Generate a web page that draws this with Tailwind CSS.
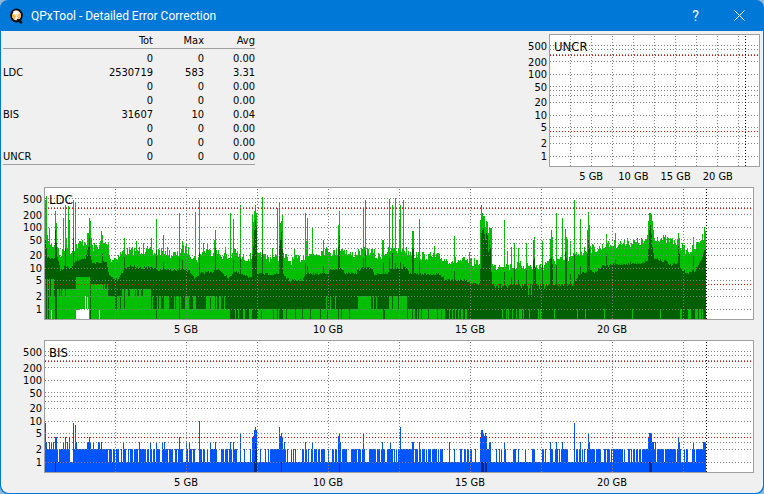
<!DOCTYPE html>
<html lang="en">
<head>
  <meta charset="UTF-8">
  <meta name="viewport" content="width=device-width, initial-scale=1.0">
  <title>QPxTool - Detailed Error Correction</title>
  <script src="https://cdn.jsdelivr.net/npm/@tailwindcss/browser@4"></script>
</head>
<body class="bg-[#8fb8d8] text-black text-[11px] leading-[14px] font-['DejaVu_Sans_Condensed','Noto_Sans',sans-serif]">
  <div class="min-h-screen flex flex-col rounded-lg overflow-hidden bg-[#0078d7]">

    <!-- Title bar -->
    <header class="flex items-center h-[31px] pl-2 text-white">
      <svg class="w-4 h-4 mr-[7px]" viewBox="0 0 16 16">
        <ellipse cx="8.5" cy="7.5" rx="5.3" ry="6" fill="#fff4d8" stroke="#0a0a0a" stroke-width="2"/>
        <path d="M8.5 7.5L5 3.6A5 5 0 0 1 8.5 2.5Z" fill="#ffffff"/>
        <path d="M8.5 7.5L4.3 6A5 5 0 0 0 6.3 11.7Z" fill="#f6b13d"/>
        <path d="M8.5 7.5L12.4 5A5 5 0 0 1 11 11.2Z" fill="#f9b766"/>
        <circle cx="8.5" cy="7.5" r="1.3" fill="#e6e2d2"/>
        <path d="M9 11.5L14 15" stroke="#0a0a0a" stroke-width="2.4"/>
      </svg>
      <h1 class="flex-1 text-[12px] font-[Roboto,sans-serif]">QPxTool - Detailed Error Correction</h1>
      <button class="w-[45px] h-full text-[14px] font-[Roboto,sans-serif]" aria-label="Help">?</button>
      <button class="w-[46px] h-full flex items-center justify-center" aria-label="Close">
        <svg class="w-[11px] h-[11px] mr-[3px]" viewBox="0 0 11 11" fill="none" stroke="#fff"><path d="M.5 .5L10.5 10.5M10.5 .5L.5 10.5"/></svg>
      </button>
    </header>

    <main class="flex-1 mx-px mb-px bg-[#f0f0f0] rounded-b-lg">
      <div class="flex items-start justify-between pt-[3px] pr-[3px]">
        <!-- Summary table -->
        <table class="ml-[2px] w-[252px] table-fixed text-right border-b border-[#a0a0a0]">
          <thead class="border-b border-[#a0a0a0]">
            <tr>
              <th class="w-[99px]"></th>
              <th class="w-[51px] font-normal">Tot</th>
              <th class="w-[51px] font-normal">Max</th>
              <th class="w-[51px] font-normal">Avg</th>
            </tr>
          </thead>
          <tbody>
            <tr><th></th><td class="pt-[3px]">0</td><td class="pt-[3px]">0</td><td class="pt-[3px]">0.00</td></tr>
            <tr><th class="text-left font-normal">LDC</th><td>2530719</td><td>583</td><td>3.31</td></tr>
            <tr><th></th><td>0</td><td>0</td><td>0.00</td></tr>
            <tr><th></th><td>0</td><td>0</td><td>0.00</td></tr>
            <tr><th class="text-left font-normal">BIS</th><td>31607</td><td>10</td><td>0.04</td></tr>
            <tr><th></th><td>0</td><td>0</td><td>0.00</td></tr>
            <tr><th></th><td>0</td><td>0</td><td>0.00</td></tr>
            <tr><th class="text-left font-normal">UNCR</th><td>0</td><td>0</td><td>0.00</td></tr>
          </tbody>
        </table>

        <!-- UNCR -->
        <section class="grid grid-cols-[43px_1fr] w-[254px]">
          <svg class="axis w-[43px] h-[133px]"></svg>
          <div class="relative h-[133px] border border-[#a0a0a0] bg-white">
            <h2 class="absolute left-1 top-1 text-[13px] leading-4">UNCR</h2>
            <svg id="uncr" class="relative block w-full h-full" viewBox="0 0 209 131" preserveAspectRatio="none" shape-rendering="crispEdges"></svg>
          </div>
          <div class="col-start-2 grid grid-cols-4 h-5 items-center px-[10%] text-center whitespace-nowrap">
            <span>5 GB</span><span>10 GB</span><span>15 GB</span><span>20 GB</span>
          </div>
        </section>
      </div>

      <!-- LDC -->
      <section class="grid grid-cols-[43px_1fr] pr-[9px]">
        <svg class="axis w-[43px] h-[133px]"></svg>
        <div class="relative h-[133px] border border-[#a0a0a0] bg-white">
          <svg id="ldc" class="block w-full h-full" viewBox="0 0 708 131" preserveAspectRatio="none" shape-rendering="crispEdges"></svg>
          <h2 class="absolute left-1 top-1 text-[13px] leading-4">LDC</h2>
        </div>
        <div class="col-start-2 grid grid-cols-4 h-5 items-center px-[10%] text-center">
          <span>5 GB</span><span>10 GB</span><span>15 GB</span><span>20 GB</span>
        </div>
      </section>

      <!-- BIS -->
      <section class="grid grid-cols-[43px_1fr] pr-[9px]">
        <svg class="axis w-[43px] h-[133px]"></svg>
        <div class="relative h-[133px] border border-[#a0a0a0] bg-white">
          <svg id="bis" class="block w-full h-full" viewBox="0 0 708 131" preserveAspectRatio="none" shape-rendering="crispEdges"></svg>
          <h2 class="absolute left-1 top-1 text-[13px] leading-4">BIS</h2>
        </div>
        <div class="col-start-2 grid grid-cols-4 h-5 items-center px-[10%] text-center">
          <span>5 GB</span><span>10 GB</span><span>15 GB</span><span>20 GB</span>
        </div>
      </section>
    </main>
  </div>

  <script>
    const BOTTOM = 131;
    const COLS = 661;
    const ROWS = [10, 14, 19, 26, 39, 51, 55, 60, 67, 80, 92, 101, 108, 121];

    // log scale labels
    const LABELS = { 500: 12, 200: 28, 100: 40, 50: 53, 20: 68, 10: 81, 5: 93, 2: 109, 1: 122 };
    document.querySelectorAll('.axis').forEach(svg => {
      svg.innerHTML = Object.entries(LABELS).map(([v, y]) => `<text x="41" y="${y + 4}" text-anchor="end">${v}</text>`).join('');
    });

    function grid(width, first, step, end) {
      const line = (x1, y1, x2, y2, color) => `<path d="M${x1} ${y1}L${x2} ${y2}" stroke="${color}" stroke-dasharray="1 2"/>`;
      let out = ROWS.map(y => line(0, y + .5, width, y + .5, '#808080')).join('');
      for (let i = 0; i < 9; i++) out += line(first + i * step + .5, 1, first + i * step + .5, BOTTOM, '#808080');
      out += line(0, 20.5, width, 20.5, '#f00') + line(0, 96.5, width, 96.5, '#f00');
      return out + line(end + .5, 1, end + .5, BOTTOM, '#000');
    }

    function bars(top, bottom, color) {
      let d = '';
      for (let x = 0; x < COLS; x++) {
        const b = bottom ? bottom[x] : BOTTOM;
        if (top[x] < b) d += `M${x} ${top[x]}h1V${b}h-1Z`;
      }
      return `<path fill="${color}" d="${d}"/>`;
    }

    let seed = 7;
    const rnd = () => (seed = (seed * 16807) % 2147483647) / 2147483647;

    // "col:y" pairs, interpolated between
    function curve(points, noise) {
      const p = points.trim().split(/\s+/).map(s => s.split(':').map(Number));
      const out = [];
      for (let x = 0, i = 0; x < COLS; x++) {
        while (i < p.length - 2 && p[i + 1][0] <= x) i++;
        const [x0, y0] = p[i], [x1, y1] = p[i + 1];
        out.push(Math.round(y0 + (y1 - y0) * (x - x0) / (x1 - x0) + (rnd() - .5) * noise));
      }
      return out;
    }
    function peaks(arr, list) {
      list.trim().split(/\s+/).forEach(s => {
        const [r, y] = s.split(':');
        const [a, b = a] = r.split('-').map(Number);
        for (let x = a; x <= b; x++) arr[x] = Number(y);
      });
      return arr;
    }

    // LDC
    const ldcMax = peaks(curve('0:54 5:57 12:56 14:68 19:63 26:64 31:57 40:53 47:60 55:56 63:56 65:71 70:70 78:64 91:62 100:62 108:65 120:62 125:66 132:67 137:60 141:62 152:71 158:62 172:65 183:70 190:64 197:70 206:69 212:68 227:70 238:68 245:73 252:71 260:68 278:63 283:62 288:65 298:60 303:67 312:65 322:63 328:64 331:69 345:62 360:62 371:67 380:68 392:69 402:72 418:73 427:75 432:73 450:79 455:76 464:79 476:77 491:79 498:78 504:70 508:72 523:73 530:67 536:64 545:60 552:61 562:57 580:55 598:54 609:49 618:51 632:55 638:60 643:64 650:59 657:49 661:47', 9),
      `0:12 1:8 2:47 4:40 10:23 11:35 18:30 20:17 21:50 23:18 24:32 28:12 30:14 42-43:45 44:30 45:33 46:50 56:43 57:47 79:50 91:53 98:55 106:50 111:31
       118:47 134:25 137:53 141:56 150:24 154:12 158:55 162:56 169:52 170:42 180:59 185:25 188:31 190:61 195:17 207:27 208:34 209:23 210:17 211:25
       217:9 227:60 232:20 234:15 235:35 236:33 237:26 249:60 260:25 261:53 262:30 267:40 278:52 293:37 294:23 318:20 320:12 337-338:52 344:11 347:17 350:10
       354:31 355:17 358:12 367-368:43 374:31 389:58 409:48 424:64 435:32 436:17 437:25 438-439:28 440:39 441:33 442:34 443:45 444-446:40 459:32 462:63 466:59 469:55 473:60
       481:55 488:52 489:49 497:53 505:51 506:42 507:49 511:25 517:30 520:41 521:49 522:52 525:53 529:12 535:31 542:42 543:24 544:37 561:46
       570:45 582:50 602:47 603:33 604-605:25 606:27 607:33 608:42 633:45 634:50 648:49 659:39 660:43`);

    const ldcAvg = peaks(curve('0:65 3:70 12:70 15:82 20:79 26:81 31:72 40:70 43:60 47:76 55:74 61:74 63:84 66:89 72:91 76:85 82:78 92:79 107:80 112:82 140:82 145:84 150:91 156:85 175:82 182:90 190:84 202:89 206:88 212:86 238:86 242:91 246:93 257:92 260:86 282:85 285:82 295:81 300:85 310:85 316:80 327:80 329:86 343:85 346:80 362:80 364:86 392:86 400:91 420:92 425:96 447:96 448:97 528:97 530:92 534:86 545:82 550:84 555:79 565:77 580:76 595:75 608:70 620:73 625:77 632:76 634:80 640:84 645:85 650:82 655:74 658:65 661:60', 3),
      `0:52 1:60 10:42 11:55 20:60 28:50 44:50 57:66 79:69 111:62 118:74 134:70 137:72 154:64 170:60 188:72 195:70 207:66 208:58 209:42 210:32 211:38 217:62
       234:58 235:52 236:44 237:60 260:75 262:78 278:78 293:59 294:48 318:70 320:63 338:75 344:70 347:65 350:75 355:74 358:76 367-368:61 374:73 409:83
       435:80 436:45 437:42 438:40 439:46 440:52 441:45 442:47 443:64 444:52 445:60 446:84 450:100 453:100 456:100 459:84 462:100 466:89 469:80 473:92 476:100 481:82 483:107 484:100 486:107
       488:72 489:70 490:80 494:101 497:77 499:101 505:71 506:69 507:76 511:77 520:64 521:70 525:86 529:67 535:78 542:66 543:51 544:60 561:66 570:72
       603:60 604:42 605:37 606:46 607:59 608:65 633:58 634:66 648:68`);

    const ldcMin = new Array(COLS).fill(BOTTOM);
    peaks(ldcMin, '0-11:91 12-30:101 31-44:89 45-62:96 63-76:108 77-105:101 106-149:108 150-397:121 281-292:121 313-325:108 344-361:108');
    for (let x = 0; x < COLS; x++) {
      const r = rnd();
      if (x < 30 && r < .2) ldcMin[x] = 108;
      else if (x > 46 && x < 77 && r < .3) ldcMin[x] = x < 63 ? 101 : 121;
      else if (x > 76 && x < 106 && r < .2) ldcMin[x] = 108;
      else if (x > 105 && x < 150 && r < .4) ldcMin[x] = 121;
      else if (x > 149 && x < 180 && r < .35) ldcMin[x] = 108;
      else if (x > 184 && x < 206 && r < .7) ldcMin[x] = BOTTOM;
      else if (x > 211 && x < 398 && ldcMin[x] === 121 && r < .2) ldcMin[x] = BOTTOM;
      else if (x > 397 && x < 425 && r < .5) ldcMin[x] = 121;
    }
    peaks(ldcMin, `1:131 3:131 10-11:131 45:131 79:121 111:131 134:131 207-211:131 234-237:131 281:108 285:108 290:108 328:108 331:108 338:131 347:121 353:121
      457:121 461:121 463:121 467:121 471:121 474-476:121 478:121 484:121 493:121 495:121 509:121 532:121 540:121 559:121 587:121 615:121 635-636:121 643-645:121 650-652:121 654:121 655:121 657:121`);
    const blank = peaks(new Array(COLS).fill(BOTTOM), '6:121 31-34:122 35-39:121 40:108 41:121 42:108 43:121 54:121');

    document.getElementById('ldc').innerHTML = bars(ldcMax, null, '#00bf00') + bars(ldcAvg, ldcMin, '#005f00') + bars(blank, null, '#fff') + grid(708, 70, 71, 661);

    // BIS
    const bisMax = peaks(new Array(COLS).fill(108),
      `13:121 25-27:121 63:121 67:121 70:121 74-75:121 77:121 81-82:121 84:121 88:121 93:121 101:121 104:121 107:121 110:121 115-117:121 123:121 128-129:121 132:121 138-140:121 143:121 147:121 150-153:121 157:121 160-161:121 163-164:121
       172-175:121 179:121 183:121 187:121 192-194:121 196-198:121 200-204:121 206:121 212-214:121 216-219:121 221-222:121 224:121 241:121 243-245:121 247:121 249:121 251-256:121 259:121 262:121 264-265:121 268:121 272:121 275:121
       280-282:121 284-286:121 289:121 292:121 296:121 302-305:121 312:121 316:121 320-323:121 331:121 335:121 340-341:121 345:121 348:121 350:121 352:121 369:121 373:121 376:121 380:121 382:121 386:121 392:121 394:121 398-403:121 405-408:121 410-414:121 417-418:121
       421:121 424:121 427-429:121 431-434:121 446-450:121 452-453:121 455:121 457-458:121 461-467:121 471-472:121 474-479:121 481-486:121 490-496:121 499:121 501-504:121 508-509:121 513:121 515:121 523-528:121 530:121 533:121 536:121 538:121 540-541:121
       550:121 556-558:121 561:121 565:121 567:121 578:121 580-582:121 585:121 587:121 590:121 593:121 596:121 611:121 619:121 631:121 636-638:121 640:121 643-646:121 650:121
       0:82 1:101 4:101 6:101 8:101 10-11:96 18:101 20:96 22:101 24:96 28:82 30:84 31:101 42-43:101 44:96 45:101 48:101 53-54:101 56:101 78:101 94:101 105:101 111:101 117:101 119:101 134:96 141:101 144:101 154:80 165:101 170:101 185:101 188:101 195:92
       207:96 208:95 209:89 210:86 211:89 234:86 235:95 236:92 237:96 239:101 260:101 267:101 293:95 294:92 295:101 318:92 337:101 345:101 355:86 367-368:101 374:101 404:101 435:96 436-437:89 438:92 439:95 440:92 441:95 444-445:101 459:101
       505:101 511:101 517:101 529:82 535:101 543:92 544:101 603:96 604-606:92 607-608:101 610:101 633:96 634:101 648:101 658-660:101`);
    const bisAvg = peaks(new Array(COLS).fill(BOTTOM), '10:121 209:121 210:102 211:108 236:121 294:121 436-438:121 440-441:121 604-606:121');

    document.getElementById('bis').innerHTML = bars(bisMax, null, '#0055ff') + bars(bisAvg, null, '#002a80') + grid(708, 70, 71, 661);

    // UNCR has no errors, only the grid
    document.getElementById('uncr').innerHTML = grid(209, 20, 21, 195);
  </script>
</body>
</html>
